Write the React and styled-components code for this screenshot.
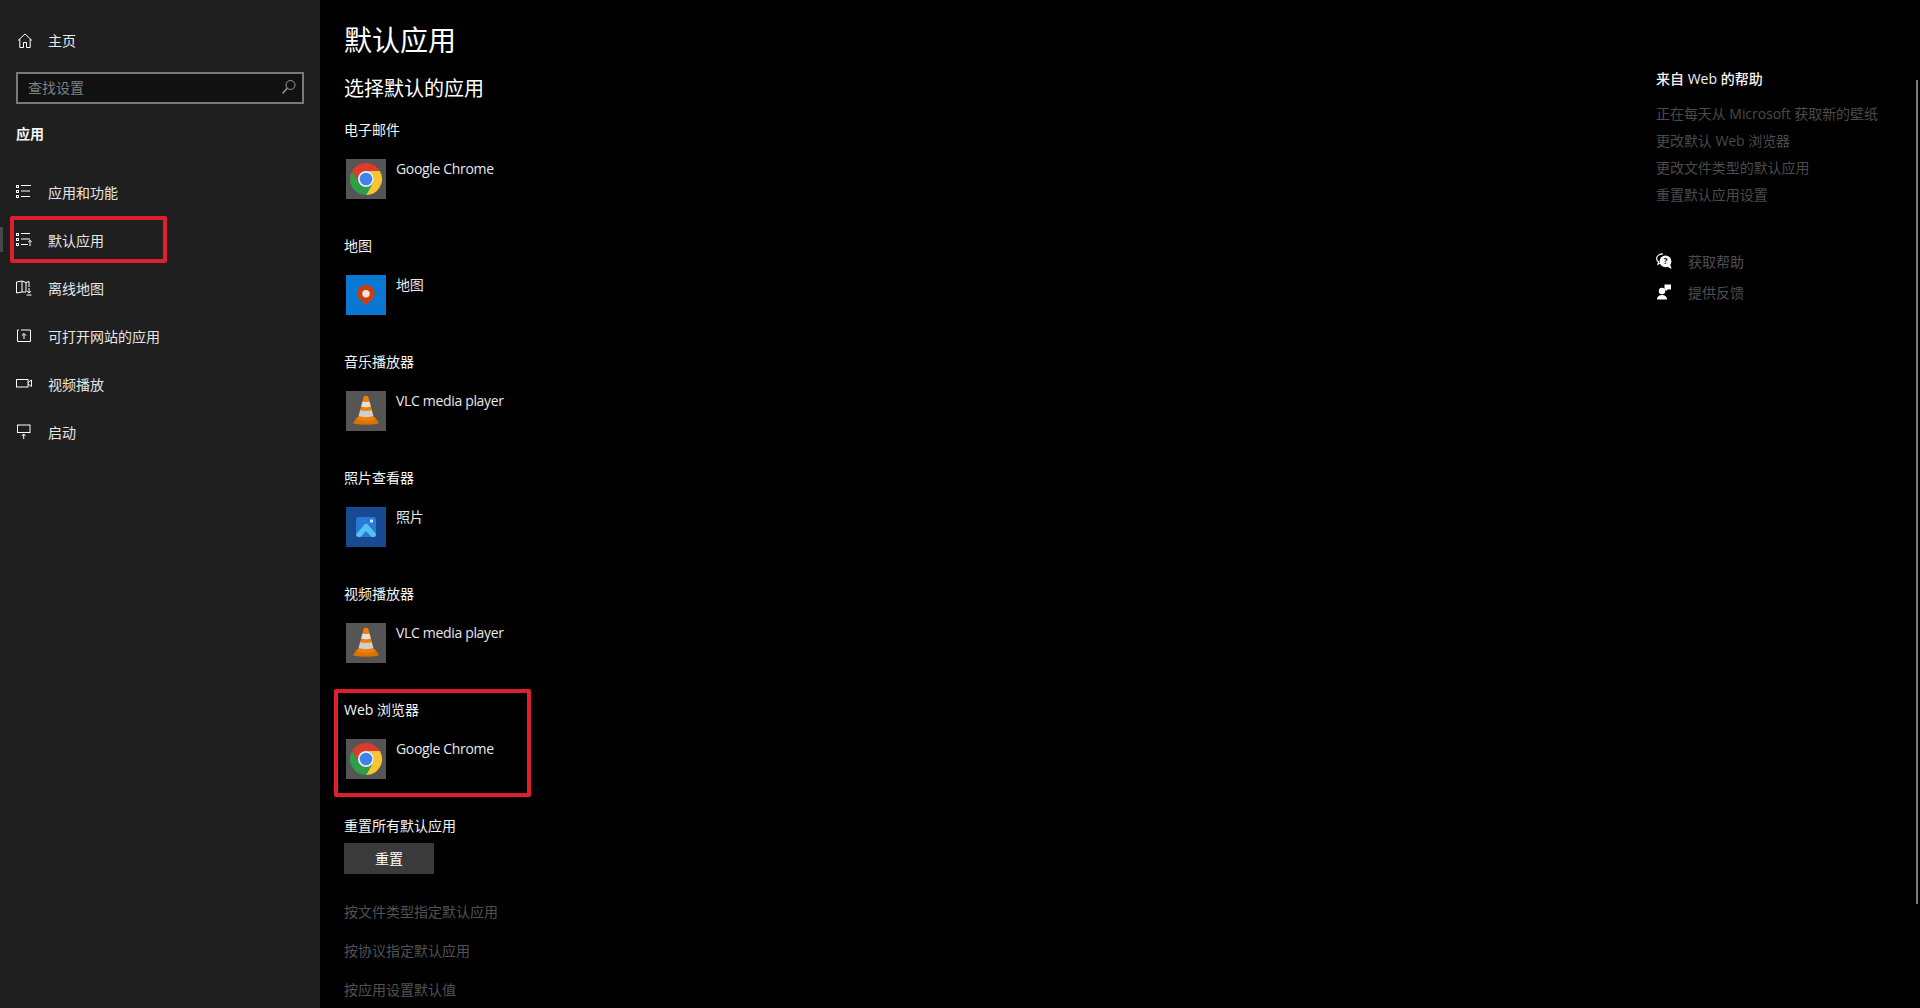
import styled, { createGlobalStyle } from 'styled-components';

const GlobalStyle = createGlobalStyle`
  html, body {
    margin: 0;
    height: 100%;
    background: #000;
  }
  body {
    font-family: "Open Sans", "Noto Sans CJK SC", sans-serif;
    font-size: 14px;
    color: #fff;
  }
`;

const Page = styled.div`
  position: relative;
  display: flex;
  width: 100%;
  height: 100vh;
  overflow: hidden;
`;

const Sidebar = styled.aside`
  flex: 0 0 320px;
  padding: 17px 16px 0;
  box-sizing: border-box;
  background: #1f1f1f;
`;

const HomeRow = styled.div`
  display: flex;
  align-items: center;
  height: 48px;
  color: #ececec;
  line-height: 20px;
`;

const IconSlot = styled.span`
  display: flex;
  flex: 0 0 32px;
  align-items: center;
  color: #fff;
`;

const SearchBox = styled.div`
  display: flex;
  align-items: center;
  justify-content: space-between;
  box-sizing: border-box;
  height: 32px;
  margin-top: 7px;
  padding: 0 5px 2px 10px;
  border: 2px solid #7a7a7a;
  background: #111;
  color: #808080;
`;

const SidebarHeading = styled.div`
  margin: 20px 0 24px;
  font-weight: 700;
  line-height: 20px;
  color: #f5f5f5;
`;

const NavList = styled.nav`
  display: flex;
  flex-direction: column;
`;

const NavItem = styled.div`
  position: relative;
  display: flex;
  align-items: center;
  height: 48px;
  color: #e6e6e6;

  ${props => props.$selected && `
    &::before {
      content: "";
      position: absolute;
      left: -16px;
      top: 11px;
      width: 3px;
      height: 25px;
      background: #484848;
    }
    &::after {
      content: "";
      position: absolute;
      left: -6px;
      top: 0;
      width: 157px;
      height: 47px;
      box-sizing: border-box;
      border: 4px solid #e01f2d;
      border-radius: 2px;
    }
  `}
`;

const Main = styled.main`
  flex: 1;
  padding: 20px 0 0 24px;
`;

const Title = styled.h1`
  margin: 0;
  font-size: 28px;
  font-weight: 400;
  line-height: 40px;
`;

const Subtitle = styled.h2`
  margin: 15px 0 17px;
  font-size: 20px;
  font-weight: 400;
  line-height: 28px;
`;

const Section = styled.section`
  position: relative;
  height: 96px;
  margin-bottom: 20px;

  ${props => props.$marked && `
    &::after {
      content: "";
      position: absolute;
      left: -10px;
      top: -11px;
      width: 197px;
      height: 108px;
      box-sizing: border-box;
      border: 4px solid #e01f2d;
      border-radius: 2px;
    }
  `}
`;

const Label = styled.div`
  line-height: 20px;
  color: #f4f4f4;
`;

const AppRow = styled.div`
  display: flex;
  gap: 10px;
  margin: 19px 0 0 2px;
  line-height: 20px;
  letter-spacing: -0.33px;
  color: #e8e8e8;
`;

const AppTile = styled.svg`
  display: block;
  width: 40px;
  height: 40px;
`;

const ResetButton = styled.button`
  display: block;
  width: 90px;
  height: 31px;
  margin-top: 7px;
  padding: 0 0 2px;
  border: none;
  background: #3a3a3a;
  color: #fff;
  font: inherit;
`;

const LinkList = styled.div`
  display: flex;
  flex-direction: column;
  gap: 19px;
  margin-top: 28px;
`;

const DimLink = styled.div`
  line-height: 20px;
  color: #525252;
`;

const HelpPane = styled.aside`
  flex: 0 0 264px;
  padding-top: 69px;
`;

const HelpHeading = styled.div`
  margin-bottom: 11px;
  font-weight: 500;
  line-height: 20px;
  color: #f4f4f4;
`;

const HelpLink = styled.div`
  line-height: 27px;
  letter-spacing: -0.05px;
  color: #4b4b4b;
`;

const HelpActions = styled.div`
  margin-top: 37px;
`;

const HelpAction = styled.div`
  display: flex;
  align-items: center;
  height: 31px;
  color: #4f4f4f;
`;

const ScrollThumb = styled.div`
  position: absolute;
  right: 2px;
  top: 80px;
  width: 2px;
  height: 824px;
  background: #7a7a7a;
`;

const Line = styled.svg`
  display: block;
  width: 16px;
  height: 16px;
  fill: none;
  stroke: currentColor;
  stroke-width: 1;
`;

const HomeIcon = () => (
  <Line viewBox="0 0 16 16" style={{ marginLeft: 1 }}>
    <path d="M1 7.5 8 1l7 6.5M2.800 6v8.500h3.700V9.500h3v5h3.700V6" />
  </Line>
);

const SearchIcon = () => (
  <Line viewBox="0 0 16 16" style={{ color: '#9a9a9a' }}>
    <circle cx="9.500" cy="6" r="4.500" />
    <path d="M6.200 9.300 1.500 14.500" strokeWidth="1.400" />
  </Line>
);

const Dots = () => (
  <>
    <rect x="0.500" y="1.500" width="2" height="2" />
    <rect x="0.500" y="6.500" width="2" height="2" />
    <rect x="0.500" y="11.500" width="2" height="2" />
  </>
);

const AppsIcon = () => (
  <Line viewBox="0 0 16 16">
    <Dots />
    <path d="M5 1.500h10M5 7h9M5 12.500h9" />
  </Line>
);

const DefaultsIcon = () => (
  <Line viewBox="0 0 16 16">
    <Dots />
    <path d="M5 1.500h9M5 7h9M5 12.500h7M14 14V8.500M12.300 10 14 8.300l1.700 1.700" />
  </Line>
);

const OfflineMapIcon = () => (
  <Line viewBox="0 0 16 16">
    <path d="M10 12H6L.5 13V2L6 1l4 1.500L13 1.500V7M6 1v11M10 2.500V12" />
    <path d="M13 8v5M11 11.200 13 13l2-1.800M10.500 15h5" />
  </Line>
);

const WebsiteIcon = () => (
  <Line viewBox="0 0 16 16">
    <path d="M5 2H14.500V13.500H1.500V2H3M8 11V5.500M5.800 7.700 8 5.500l2.200 2.200" />
  </Line>
);

const VideoIcon = () => (
  <Line viewBox="0 0 16 16">
    <rect x="0.500" y="3.500" width="11.500" height="7.500" />
    <path d="M12 6.500 15.500 4v6.500L12 8" />
  </Line>
);

const StartupIcon = () => (
  <Line viewBox="0 0 16 16">
    <rect x="1.500" y="1" width="12.500" height="7.500" />
    <path d="M7.700 15V10M5.800 12l1.900-2 1.900 2" />
  </Line>
);

const HelpIcon = () => (
  <svg width="16" height="16" viewBox="0 0 16 16" style={{ display: 'block' }}>
    <path d="M7 .8C3.500.8.600 2.800.600 5.500c0 1.400.8 2.700 2 3.500L2 11.200l3-1.500" fill="none" stroke="#fff" strokeWidth="1.200" />
    <circle cx="9.500" cy="8.300" r="5.900" fill="#fff" />
    <path d="M11 13.500 15.500 16l-1-4z" fill="#fff" />
    <text x="9.500" y="11.300" textAnchor="middle" fontSize="8.500" fontWeight="700" fill="#000">?</text>
  </svg>
);

const FeedbackIcon = () => (
  <svg width="16" height="16" viewBox="0 0 16 16" style={{ display: 'block' }}>
    <circle cx="6" cy="7" r="3.200" fill="#fff" />
    <path d="M1 15.500c0-3 2-4.500 5-4.500s5 1.500 5 4.500z" fill="#fff" />
    <path d="M8.500.5H15V5.500H11.500L9.500 7.500V5.500H8.500z" fill="#fff" />
  </svg>
);

const ChromeTile = () => (
  <AppTile viewBox="0 0 40 40">
    <rect width="40" height="40" fill="#555" />
    <path d="M6.140 12A16 16 0 0 1 33.860 12H20A8 8 0 0 0 13.070 24z" fill="#dc3b2e" />
    <path d="M33.860 12A16 16 0 0 1 20 36L26.930 24A8 8 0 0 0 20 12z" fill="#f6c52f" />
    <path d="M6.140 12A16 16 0 0 0 20 36L26.930 24A8 8 0 0 1 13.070 24z" fill="#2f9e4a" />
    <circle cx="20" cy="20" r="8" fill="#f1f1f1" />
    <circle cx="20" cy="20" r="6.300" fill="#3f83ea" />
  </AppTile>
);

const MapsTile = () => (
  <AppTile viewBox="0 0 40 40">
    <rect width="40" height="40" fill="#0a78d2" />
    <path d="M20 30.500c-1-2.500-8.800-6-8.800-12a8.800 8.800 0 0 1 17.600 0c0 6-7.800 9.500-8.800 12z" fill="#c8400f" />
    <circle cx="20" cy="18.700" r="3.700" fill="#f5e6dc" />
  </AppTile>
);

const VlcTile = () => (
  <AppTile viewBox="0 0 40 40">
    <rect width="40" height="40" fill="#555" />
    <path d="M7 32.500 11 26h18l4 6.500q-13 2.500-26 0z" fill="#d97400" />
    <path d="M17.800 5.500c1-1 3.400-1 4.400 0l6.300 23c-3 2.200-14 2.200-17 0z" fill="#f07f08" />
    <path d="M16.500 10.500c2 .8 5 .8 7 0l1.300 5c-2.500 1-7 1-9.600 0z" fill="#e0e0e0" />
    <path d="M14.300 19c3 1.200 8.400 1.200 11.400 0l1.500 6c-3.500 1.500-10.900 1.500-14.400 0z" fill="#cfcfcf" />
  </AppTile>
);

const PhotosTile = () => (
  <AppTile viewBox="0 0 40 40">
    <rect width="40" height="40" fill="#174a91" />
    <rect x="10" y="10" width="20" height="20" rx="2.500" fill="#2a78d8" />
    <path d="M10 27.500 18.500 17.500c1-1 2.200-1 3.200 0l8.300 9.500c0 2-1 3-2.500 3h-2L20 24 14.500 30H12.500C11 30 10 29 10 27.500z" fill="#53c4f2" />
    <circle cx="25.500" cy="14" r="1.700" fill="#cfe6fa" />
  </AppTile>
);

const NAV_ITEMS = [
  { label: '应用和功能', Icon: AppsIcon },
  { label: '默认应用', Icon: DefaultsIcon, selected: true },
  { label: '离线地图', Icon: OfflineMapIcon },
  { label: '可打开网站的应用', Icon: WebsiteIcon },
  { label: '视频播放', Icon: VideoIcon },
  { label: '启动', Icon: StartupIcon },
];

const DEFAULT_APPS = [
  { label: '电子邮件', app: 'Google Chrome', Tile: ChromeTile },
  { label: '地图', app: '地图', Tile: MapsTile },
  { label: '音乐播放器', app: 'VLC media player', Tile: VlcTile },
  { label: '照片查看器', app: '照片', Tile: PhotosTile },
  { label: '视频播放器', app: 'VLC media player', Tile: VlcTile },
  { label: 'Web 浏览器', app: 'Google Chrome', Tile: ChromeTile, marked: true },
];

const App = () => (
  <Page>
    <GlobalStyle />
    <Sidebar>
      <HomeRow>
        <IconSlot><HomeIcon /></IconSlot>
        主页
      </HomeRow>
      <SearchBox>
        查找设置
        <SearchIcon />
      </SearchBox>
      <SidebarHeading>应用</SidebarHeading>
      <NavList>
        {NAV_ITEMS.map(({ label, Icon, selected }) => (
          <NavItem key={label} $selected={selected}>
            <IconSlot><Icon /></IconSlot>
            {label}
          </NavItem>
        ))}
      </NavList>
    </Sidebar>

    <Main>
      <Title>默认应用</Title>
      <Subtitle>选择默认的应用</Subtitle>
      {DEFAULT_APPS.map(({ label, app, Tile, marked }) => (
        <Section key={label} $marked={marked}>
          <Label>{label}</Label>
          <AppRow>
            <Tile />
            {app}
          </AppRow>
        </Section>
      ))}
      <Label>重置所有默认应用</Label>
      <ResetButton>重置</ResetButton>
      <LinkList>
        <DimLink>按文件类型指定默认应用</DimLink>
        <DimLink>按协议指定默认应用</DimLink>
        <DimLink>按应用设置默认值</DimLink>
      </LinkList>
    </Main>

    <HelpPane>
      <HelpHeading>来自 Web 的帮助</HelpHeading>
      <HelpLink>正在每天从 Microsoft 获取新的壁纸</HelpLink>
      <HelpLink>更改默认 Web 浏览器</HelpLink>
      <HelpLink>更改文件类型的默认应用</HelpLink>
      <HelpLink>重置默认应用设置</HelpLink>
      <HelpActions>
        <HelpAction>
          <IconSlot><HelpIcon /></IconSlot>
          获取帮助
        </HelpAction>
        <HelpAction>
          <IconSlot><FeedbackIcon /></IconSlot>
          提供反馈
        </HelpAction>
      </HelpActions>
    </HelpPane>
    <ScrollThumb />
  </Page>
);

export default App;
